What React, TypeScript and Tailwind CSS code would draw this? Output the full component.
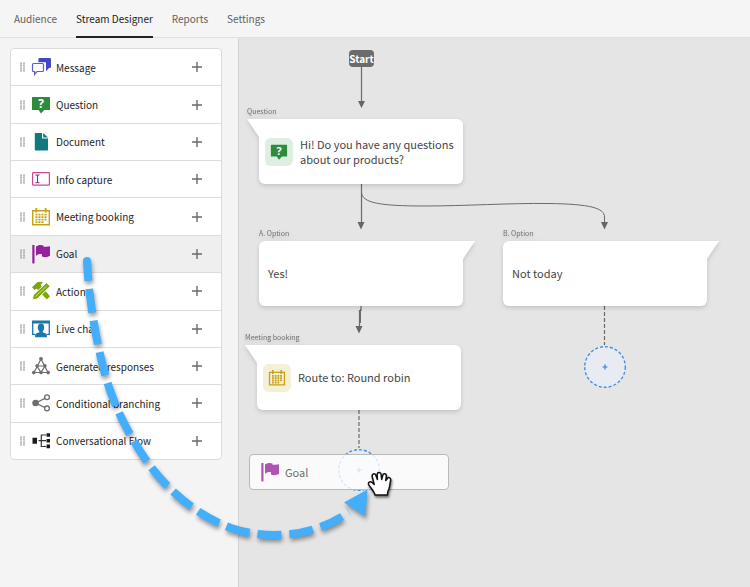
import type { ReactNode } from "react";

const MessageIcon = () => (
    <svg viewBox="0 0 20 20" className="h-5 w-5" aria-hidden="true">
        <path d="M8.500 1h10.300Q20 1 20 2.200v7.600Q20 11 18.800 11H18l-3 3.200V5.200H7.400v-3Q7.400 1 8.500 1z" fill="#4646c6" />
        <path d="M2.500 6.500h9q1 0 1 1v6q0 1-1 1H6L3.600 17.400V14.500H2.500q-1 0-1-1v-6q0-1 1-1z" fill="#fff" stroke="#5c5cd0" strokeWidth="1.200" />
    </svg>
);

const QuestionIcon = () => (
    <svg viewBox="0 0 20 20" className="h-5 w-5 overflow-visible font-['Open_Sans',sans-serif]" aria-hidden="true">
        <path d="M1.600 2h16.800q.6 0 .6.600v11.800q0 .6-.6.600h-5.200L10 18.500 7.600 15h-6Q1 15 1 14.400V2.600q0-.6.600-.6z" fill="#2d8b3c" />
        <text x="10" y="13" textAnchor="middle" fontSize="12" fontWeight="700" fill="#fff">?</text>
    </svg>
);

const DocumentIcon = () => (
    <svg viewBox="0 0 20 20" className="h-5 w-5" aria-hidden="true">
        <path d="M4.500 1H11v5.500h6v11.300q0 .7-.7.700H4.500q-.7 0-.7-.7V1.700q0-.7.700-.7z" fill="#0f797d" />
        <path d="M12.200 1 17 5.500h-4.800z" fill="#0f797d" />
    </svg>
);

const InfoIcon = () => (
    <svg viewBox="0 0 20 20" className="h-5 w-5" aria-hidden="true">
        <rect x="1.600" y="3.600" width="16.800" height="12.500" rx=".5" fill="#fff" stroke="#c44a94" strokeWidth="1.200" />
        <path d="M4.500 6h1.300l.7.600.7-.6h1.300M4.500 13.700h1.300l.7-.6.7.600h1.300M6.500 6.600v6.500" fill="none" stroke="#a8237d" strokeWidth="1.100" />
    </svg>
);

const CalendarIcon = () => (
    <svg viewBox="0 0 20 20" className="h-5 w-5" aria-hidden="true">
        <path d="M1.700 3.700h16.600v14H1.700z" fill="none" stroke="#c5a118" strokeWidth="1.400" />
        <path d="M5.300 1v4.500M14.700 1v4.500" stroke="#c5a118" strokeWidth="1.800" />
        <path d="M4.500 7.700h11M4.500 10.200h11M4.500 12.700h11M4.500 15.200h8.500" stroke="#c5a118" strokeWidth="1.800" strokeDasharray="2 1" />
    </svg>
);

const FlagIcon = () => (
    <svg viewBox="0 0 20 20" className="h-5 w-5" aria-hidden="true">
        <rect x="1.300" y="1" width="2.200" height="18.500" rx=".4" fill="#951f9c" />
        <path d="M5 2.500C7 .7 10 .5 12.500 1.500v1.200c1.500 0 4.500.3 6.500-.4v9.500c-2 1.500-5.500 1.800-8 .7v-2.200C9 9.700 7 10 5 12z" fill="#951f9c" />
    </svg>
);

const ActionIcon = () => (
    <svg viewBox="0 0 20 20" className="h-5 w-5" aria-hidden="true">
        <path d="M1 6.300 6.200 1.200Q9 .2 12 1.200L9.500 3.700l1 1.800L19 15.300l-3.200 3.200L6.500 8.600 5.300 7.400 3.500 9z" fill="#7aa60a" />
        <path d="M1.500 18.800 2.300 14 15.500 1.700l3.700 3.600L6 18z" fill="#7aa60a" stroke="#fff" strokeWidth="1" />
        <path d="m4.500 15.600 11-10.500" stroke="#fff" strokeWidth=".6" />
    </svg>
);

const LiveChatIcon = () => (
    <svg viewBox="0 0 20 20" className="h-5 w-5" aria-hidden="true">
        <path d="M1 1.500h18v3H1z" fill="#1b77ac" />
        <path d="M4 15.300H1.700V4M16 15.300h2.300V4" fill="none" stroke="#1b77ac" strokeWidth="1.300" />
        <ellipse cx="10" cy="8.600" rx="3.200" ry="4" fill="#1b77ac" />
        <path d="M8.300 11h3.400v2.200l3.200 1.200q1 .5 1 1.600v2.200H4.100V16q0-1.100 1-1.600l3.200-1.200z" fill="#1b77ac" />
    </svg>
);

const GeneratedIcon = () => (
    <svg viewBox="0 0 20 20" className="h-5 w-5" aria-hidden="true">
        <path d="M10 3 3 16.500h14zM6 10h8l-4 6.500z" fill="none" stroke="#6e6e6e" strokeWidth="1.200" />
        <g fill="#6e6e6e">
            <circle cx="10" cy="2.800" r="1.900" />
            <circle cx="6" cy="9.800" r="1.700" />
            <circle cx="14" cy="9.800" r="1.700" />
            <circle cx="2.800" cy="16.600" r="1.800" />
            <circle cx="10" cy="16.600" r="1.800" />
            <circle cx="17.200" cy="16.600" r="1.800" />
        </g>
    </svg>
);

const BranchingIcon = () => (
    <svg viewBox="0 0 20 20" className="h-5 w-5" aria-hidden="true">
        <path d="m4.500 10 11-5.400M4.500 10l11 5.400" stroke="#6e6e6e" strokeWidth="1.300" />
        <circle cx="4.600" cy="10" r="3.300" fill="#6e6e6e" />
        <circle cx="16" cy="4.300" r="2.400" fill="#fff" stroke="#6e6e6e" strokeWidth="1.300" />
        <circle cx="16" cy="15.400" r="2.400" fill="#fff" stroke="#6e6e6e" strokeWidth="1.300" />
    </svg>
);

const FlowIcon = () => (
    <svg viewBox="0 0 20 20" className="h-5 w-5" aria-hidden="true">
        <path d="M7.500 9.700H15M15 4h-4.700v11.500H15" fill="none" stroke="#333" strokeWidth="1.200" />
        <path d="M1.500 6.700H6v6H1.500zM15.500 2.200H19v3.600h-3.500zM15.500 7.900H19v3.600h-3.500zM15.500 13.600H19v3.600h-3.500z" fill="#1c1c1c" />
    </svg>
);

const Grip = () => (
    <svg viewBox="0 0 5 10" className="h-[10px] w-[5px]" aria-hidden="true">
        <path d="M1 .5v9M4 .5v9" stroke="#8a8a8a" strokeWidth="1.500" strokeDasharray="1.200 .75" />
    </svg>
);

const tabs = ["Audience", "Stream Designer", "Reports", "Settings"];

const items: { label: string; icon: ReactNode }[] = [
    { label: "Message", icon: <MessageIcon /> },
    { label: "Question", icon: <QuestionIcon /> },
    { label: "Document", icon: <DocumentIcon /> },
    { label: "Info capture", icon: <InfoIcon /> },
    { label: "Meeting booking", icon: <CalendarIcon /> },
    { label: "Goal", icon: <FlagIcon /> },
    { label: "Action", icon: <ActionIcon /> },
    { label: "Live chat", icon: <LiveChatIcon /> },
    { label: "Generated responses", icon: <GeneratedIcon /> },
    { label: "Conditional branching", icon: <BranchingIcon /> },
    { label: "Conversational Flow", icon: <FlowIcon /> },
];

const Bubble = ({ place, title, tail, children }: { place: string; title: string; tail: "left" | "right"; children: ReactNode }) => (
    <article className={`absolute h-[65px] w-[204px] drop-shadow-[0_2px_2px_rgba(0,0,0,0.14)] ${place}`}>
        <div className={`flex h-full items-center whitespace-nowrap rounded-md bg-white text-[11px] leading-[15px] text-[#444] ${tail === "left" ? "rounded-tl-none pl-[6px]" : "rounded-tr-none pl-[9px]"}`}>
            {children}
        </div>
        <span
            className={tail === "left"
                ? "absolute right-full top-0 h-[18px] w-3 bg-white [clip-path:polygon(0_0,100%_0,100%_100%)]"
                : "absolute left-full top-0 h-[18px] w-3 bg-white [clip-path:polygon(0_0,100%_0,0_100%)]"}
        />
        <h3 className={`absolute bottom-full mb-[3px] whitespace-nowrap text-[7px] leading-[10px] text-[#707070] ${tail === "left" ? "-left-3" : "left-0"}`}>{title}</h3>
    </article>
);

const Connectors = () => (
    <svg viewBox="239 38 511 549" className="absolute left-0 top-0 h-[549px] w-[511px]" aria-hidden="true">
        <g fill="none" stroke="#6b6b6b">
            <path d="M361.500 66v37M361.500 184v40M361 306v5M359.500 310v18" strokeWidth="1.200" />
            <path d="M360.500 309v14" strokeWidth="1" />
            <path d="M361.500 192C361.500 203 380 206 425 206C465 206 510 203 548 203.500C590 204 604.500 208 604.500 217V224" />
            <path d="M604.500 306v39M359 410v38" strokeWidth="1.200" strokeDasharray="4 2" />
        </g>
        <path d="M358 101h7l-3.500 7zM357.500 222h7l-3.500 7.500zM601 222h7l-3.500 7.500zM355.500 326h7l-3.500 7.500z" fill="#666" />
    </svg>
);

const DropTarget = ({ place }: { place: string }) => (
    <button aria-label="Add step" className={`absolute h-[42px] w-[42px] ${place}`}>
        <svg viewBox="0 0 42 42" className="h-[42px] w-[42px]" aria-hidden="true">
            <circle cx="21" cy="21" r="20.300" fill="#e8ecf2" stroke="#3f90ea" strokeWidth="1.400" strokeDasharray="3 2" />
            <path d="M21 18.500v5M18.500 21h5" stroke="#2680eb" strokeWidth="1.200" />
        </svg>
    </button>
);

const DragTrail = () => (
    <svg viewBox="0 0 750 587" className="pointer-events-none absolute left-0 top-0 h-[587px] w-[750px] drop-shadow-[1px_3px_2px_rgba(0,0,0,0.4)]" aria-hidden="true">
        <circle cx="87" cy="261" r="4" fill="#42aefc" />
        <path
            d="M87 261C89 300 96 342 106 378C115 408 128 434 148 463C166 488 195 515 231 528C271 541 315 536 349 512"
            fill="none"
            stroke="#42aefc"
            strokeWidth="8"
            strokeDasharray="24 8"
            strokeDashoffset="4"
        />
        <path d="M367.500 489.500 344 502.500l21.500 14z" fill="#42aefc" />
    </svg>
);

const GrabHand = () => (
    <svg viewBox="0 0 26 27" className="pointer-events-none absolute left-[367px] top-[470px] h-[27px] w-[26px] drop-shadow-[1px_2px_1px_rgba(0,0,0,0.5)]" aria-hidden="true">
        <path
            d="M8 25C7.500 21.500 4 18.500 1.800 14.800C.6 12.200 3.200 10.900 5 12.500L7.200 14.500L5.200 6.800C4.600 3.600 7.900 2.800 8.900 5.400L10.400 9.600L10.200 4.600C10.200 1.700 13.800 1.700 14.100 4.400L14.700 9.400L15.800 5.300C16.500 2.700 19.700 3.500 19.300 6.300L18.800 10.600L20.200 8.700C21.600 6.600 24.300 7.800 23.600 10.500C22.800 13.500 23.200 16 21.800 19C20.800 21 20.500 22.500 20.500 25Z"
            fill="#fff"
            stroke="#111"
            strokeWidth="1.500"
            strokeLinejoin="round"
        />
    </svg>
);

const App = () => {
    return (
        <div className="relative flex min-h-screen flex-col overflow-hidden bg-[#f4f4f4] font-['Noto_Sans_CJK_SC',sans-serif] text-[10px] text-[#1c1c1c]">
            <nav className="flex h-[38px] items-stretch gap-[19px] border-b border-[#e0e0e0] bg-[#f5f5f5] px-[14px] text-[#606060]">
                {tabs.map((tab) => (
                    <a
                        key={tab}
                        href="#"
                        className={`-mb-px flex items-center border-b-2 ${tab === "Stream Designer" ? "border-[#222] text-[#1c1c1c]" : "border-transparent"}`}
                    >
                        {tab}
                    </a>
                ))}
            </nav>
            <div className="flex flex-1">
                <aside className="w-[239px] shrink-0 border-r border-[#d3d3d3] px-[10px] pt-[10px]">
                    <ul className="mr-[6px] flex h-[412px] flex-col divide-y divide-[#dcdcdc] overflow-hidden rounded border border-[#dcdcdc] bg-white">
                        {items.map(({ label, icon }) => (
                            <li key={label} className={`flex flex-1 items-center pl-[9px] pr-[19px] ${label === "Goal" ? "bg-[#efefef]" : ""}`}>
                                <Grip />
                                <span className="ml-[6px] mr-[5px]">{icon}</span>
                                <span className="flex-1 whitespace-nowrap">{label}</span>
                                <button aria-label={`Add ${label}`}>
                                    <svg viewBox="0 0 10 10" className="h-[10px] w-[10px]" aria-hidden="true">
                                        <path d="M5 0v10M0 5h10" stroke="#6a6a6a" strokeWidth="1.400" />
                                    </svg>
                                </button>
                            </li>
                        ))}
                    </ul>
                </aside>
                <main className="relative flex-1 bg-[#e5e5e5]">
                    <Connectors />
                    <span className="absolute left-[110px] top-3 flex h-[17px] w-[25px] items-center justify-center rounded bg-[#6b6b6b] font-bold text-white">Start</span>
                    <Bubble place="left-5 top-[81px]" title="Question" tail="left">
                        <span className="mr-[7px] flex h-7 w-7 items-center justify-center rounded-md bg-[#deeee0] [&>svg]:h-[18px] [&>svg]:w-[18px]"><QuestionIcon /></span>
                        <p>Hi! Do you have any questions<br />about our products?</p>
                    </Bubble>
                    <Bubble place="left-5 top-[203px]" title="A. Option" tail="right"><p>Yes!</p></Bubble>
                    <Bubble place="left-[264px] top-[203px]" title="B. Option" tail="right"><p>Not today</p></Bubble>
                    <Bubble place="left-[18px] top-[307px]" title="Meeting booking" tail="left">
                        <span className="mr-[7px] flex h-7 w-7 items-center justify-center rounded-md bg-[#f5efd6] [&>svg]:h-[18px] [&>svg]:w-[18px]"><CalendarIcon /></span>
                        <p>Route to: Round robin</p>
                    </Bubble>
                    <DropTarget place="left-[345px] top-[308px]" />
                    <DropTarget place="left-[99px] top-[411px]" />
                    <div className="absolute left-[10px] top-[416px] flex h-9 w-[200px] items-center rounded-sm border border-[#b9b9b9] bg-white/80 pl-[10px] text-[11px] text-[#6e6e6e]">
                        <span className="mr-[5px] opacity-75"><FlagIcon /></span>
                        Goal
                    </div>
                </main>
            </div>
            <DragTrail />
            <GrabHand />
        </div>
    );
};

export default App;
